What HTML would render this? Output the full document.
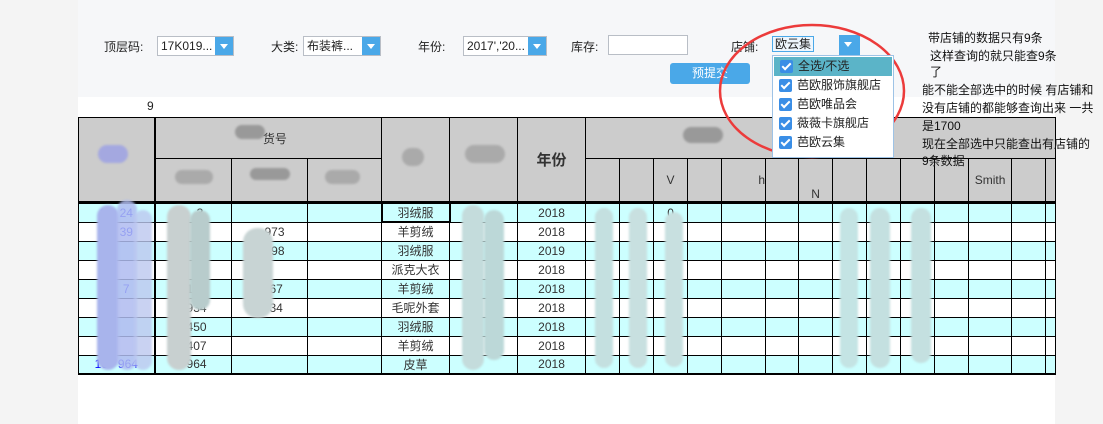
<!DOCTYPE html>
<html><head><meta charset="utf-8"><style>
*{margin:0;padding:0;box-sizing:border-box}
body{width:1103px;height:424px;background:#f4f4f4;font-family:"Liberation Sans","Noto Sans CJK SC",sans-serif;font-size:12px;color:#222;position:relative;overflow:hidden}
.main{position:absolute;left:78px;top:0;width:977px;height:424px;background:#fff}
.top{position:absolute;left:78px;top:0;width:977px;height:97px;background:#f6f7f9}
.a{position:absolute;white-space:nowrap}
.sel{position:absolute;height:20px;border:1px solid #b9bec6;background:#fff;font-size:12px;line-height:18px;padding-left:3px;overflow:hidden}
.sel i{position:absolute;right:0;top:0;width:18px;height:18px;background:#4aa8e8}
.sel i:after{content:"";position:absolute;left:5px;top:7px;border-left:4px solid transparent;border-right:4px solid transparent;border-top:5px solid #fff}
table{position:absolute;left:78px;top:117px;width:977px;border-collapse:collapse;table-layout:fixed}
td{border:1px solid #000;text-align:center;font-size:12px;height:19px;padding:0;overflow:hidden;white-space:nowrap;color:#333}
thead td{background:#ccc}
tr.c td{background:#ccffff}
a{color:#00f}
.bl{position:absolute;border-radius:14px;filter:blur(1px)}
.dd{position:absolute;left:772px;top:55px;width:122px;height:103px;background:#fff;border:1px solid #9ec3e6}
.it{height:19px;line-height:19px;padding-left:24px;position:relative;font-size:12px}
.it b{position:absolute;left:6px;top:3px;width:13px;height:13px;background:#3a8ee6;border-radius:2px}
.it b:after{content:"";position:absolute;left:4px;top:1px;width:3px;height:7px;border:solid #fff;border-width:0 2px 2px 0;transform:rotate(45deg)}
.note{position:absolute;font-size:12px;line-height:18px;color:#111;white-space:nowrap}
</style></head><body>
<div class="main"></div>
<div class="top"></div>
<div class="a" style="left:104px;top:38px">顶层码:</div>
<div class="sel" style="left:157px;top:36px;width:77px">17K019...<i></i></div>
<div class="a" style="left:271px;top:38px">大类:</div>
<div class="sel" style="left:303px;top:36px;width:78px">布装裤...<i></i></div>
<div class="a" style="left:418px;top:38px">年份:</div>
<div class="sel" style="left:463px;top:36px;width:84px">2017','20...<i></i></div>
<div class="a" style="left:571px;top:38px">库存:</div>
<div class="sel" style="left:608px;top:35px;width:80px"></div>
<div class="a" style="left:731px;top:38px">店铺:</div>
<div class="sel" style="left:770px;top:35px;width:90px;border:none;background:transparent"><span style="border:1px solid #4aa8e8;background:#eef6fd;padding:0 2px;margin-left:-1px">欧云集</span><i style="width:21px;height:20px;top:0"></i></div>
<div class="a" style="left:670px;top:63px;width:80px;height:21px;background:#4aa8e8;border-radius:3px;color:#fff;text-align:center;line-height:21px">预提交</div>
<div class="a" style="left:147px;top:99px">9</div>

<table>
<colgroup><col style="width:76px"><col style="width:77px"><col style="width:76px"><col style="width:74px"><col style="width:68px"><col style="width:68px"><col style="width:68px"><col style="width:34px"><col style="width:34px"><col style="width:34px"><col style="width:34px"><col style="width:44px"><col style="width:33px"><col style="width:34px"><col style="width:34px"><col style="width:34px"><col style="width:34px"><col style="width:34px"><col style="width:43px"><col style="width:34px"><col style="width:10px"></colgroup>
<thead>
<tr style="height:41px"><td rowspan="2" style="border-right:2px solid #000"></td><td colspan="3">&nbsp;&nbsp;&nbsp;&nbsp;货号</td><td rowspan="2"></td><td rowspan="2"></td><td rowspan="2" style="font-size:15px;font-weight:bold">年份</td><td colspan="14"></td></tr>
<tr style="height:44px;border-bottom:3px solid #000"><td></td><td></td><td></td><td></td><td></td><td>V</td><td></td><td style="text-align:right">h</td><td></td><td style="vertical-align:bottom">N</td><td></td><td></td><td></td><td></td><td>Smith</td><td></td><td></td></tr>
</thead>
<tbody>
<tr class="c"><td style="border-right:2px solid #000"><a>1&nbsp;&nbsp;&nbsp;&nbsp;24</a></td><td>&nbsp;&nbsp;&nbsp;&nbsp;3</td><td></td><td></td><td style="border:2px solid #000">羽绒服</td><td></td><td>2018</td><td></td><td></td><td>0</td><td></td><td></td><td></td><td></td><td></td><td></td><td></td><td></td><td></td><td></td><td></td></tr>
<tr><td style="border-right:2px solid #000"><a>1&nbsp;&nbsp;&nbsp;&nbsp;39</a></td><td>&nbsp;&nbsp;&nbsp;&nbsp;3</td><td>&nbsp;&nbsp;&nbsp;973</td><td></td><td>羊剪绒</td><td></td><td>2018</td><td></td><td></td><td></td><td></td><td></td><td></td><td></td><td></td><td></td><td></td><td></td><td></td><td></td><td></td></tr>
<tr class="c"><td style="border-right:2px solid #000"><a>1&nbsp;&nbsp;&nbsp;&nbsp;</a></td><td>&nbsp;&nbsp;&nbsp;98</td><td>&nbsp;&nbsp;&nbsp;298</td><td></td><td>羽绒服</td><td></td><td>2019</td><td></td><td></td><td></td><td></td><td></td><td></td><td></td><td></td><td></td><td></td><td></td><td></td><td></td><td></td></tr>
<tr><td style="border-right:2px solid #000"></td><td>&nbsp;&nbsp;&nbsp;78</td><td></td><td></td><td>派克大衣</td><td></td><td>2018</td><td></td><td></td><td></td><td></td><td></td><td></td><td></td><td></td><td></td><td></td><td></td><td></td><td></td><td></td></tr>
<tr class="c"><td style="border-right:2px solid #000"><a>1&nbsp;&nbsp;&nbsp;&nbsp;7</a></td><td>&nbsp;&nbsp;167</td><td>&nbsp;&nbsp;167</td><td></td><td>羊剪绒</td><td></td><td>2018</td><td></td><td></td><td></td><td></td><td></td><td></td><td></td><td></td><td></td><td></td><td></td><td></td><td></td><td></td></tr>
<tr><td style="border-right:2px solid #000"></td><td>&nbsp;&nbsp;934</td><td>&nbsp;&nbsp;934</td><td></td><td>毛呢外套</td><td></td><td>2018</td><td></td><td></td><td></td><td></td><td></td><td></td><td></td><td></td><td></td><td></td><td></td><td></td><td></td><td></td></tr>
<tr class="c"><td style="border-right:2px solid #000"></td><td>&nbsp;&nbsp;450</td><td></td><td></td><td>羽绒服</td><td></td><td>2018</td><td></td><td></td><td></td><td></td><td></td><td></td><td></td><td></td><td></td><td></td><td></td><td></td><td></td><td></td></tr>
<tr><td style="border-right:2px solid #000"></td><td>&nbsp;&nbsp;407</td><td></td><td></td><td>羊剪绒</td><td></td><td>2018</td><td></td><td></td><td></td><td></td><td></td><td></td><td></td><td></td><td></td><td></td><td></td><td></td><td></td><td></td></tr>
<tr class="c" style="border-bottom:2px solid #000"><td style="border-right:2px solid #000"><a>16&nbsp;&nbsp;&nbsp;964</a></td><td>&nbsp;&nbsp;964</td><td></td><td></td><td>皮草</td><td></td><td>2018</td><td></td><td></td><td></td><td></td><td></td><td></td><td></td><td></td><td></td><td></td><td></td><td></td><td></td><td></td></tr>
</tbody></table>

<div class="bl" style="left:97px;top:205px;width:22px;height:165px;background:#a8b4ec"></div>
<div class="bl" style="left:117px;top:200px;width:20px;height:170px;background:#b0bcf0;opacity:.85"></div>
<div class="bl" style="left:134px;top:210px;width:18px;height:160px;background:#bcc8f0;opacity:.8"></div>
<div class="bl" style="left:98px;top:145px;width:30px;height:18px;background:#a4a8e0"></div>
<div class="bl" style="left:167px;top:205px;width:24px;height:165px;background:#c8d0d0"></div>
<div class="bl" style="left:190px;top:210px;width:20px;height:100px;background:#b8cccc"></div>
<div class="bl" style="left:243px;top:228px;width:30px;height:90px;background:#c8d4d4"></div>
<div class="bl" style="left:462px;top:205px;width:22px;height:165px;background:#c4dcdc"></div>
<div class="bl" style="left:484px;top:210px;width:20px;height:150px;background:#bcd8d8"></div>
<div class="bl" style="left:595px;top:208px;width:18px;height:160px;background:#c4e0e0"></div>
<div class="bl" style="left:629px;top:208px;width:18px;height:160px;background:#c8e0e0"></div>
<div class="bl" style="left:665px;top:212px;width:18px;height:155px;background:#c8e0e0"></div>
<div class="bl" style="left:840px;top:208px;width:18px;height:160px;background:#c4e4e4"></div>
<div class="bl" style="left:870px;top:208px;width:20px;height:160px;background:#c4e0e0"></div>
<div class="bl" style="left:911px;top:208px;width:20px;height:155px;background:#c4e0e0"></div>
<div class="bl" style="left:235px;top:125px;width:30px;height:14px;background:#999"></div>
<div class="bl" style="left:175px;top:170px;width:38px;height:14px;background:#aaa"></div>
<div class="bl" style="left:250px;top:168px;width:40px;height:12px;background:#999"></div>
<div class="bl" style="left:325px;top:170px;width:35px;height:14px;background:#aaa"></div>
<div class="bl" style="left:402px;top:148px;width:22px;height:18px;background:#aaa"></div>
<div class="bl" style="left:465px;top:145px;width:40px;height:18px;background:#aaa"></div>
<div class="bl" style="left:683px;top:127px;width:40px;height:16px;background:#999"></div>

<svg class="a" style="left:0;top:0" width="1103" height="424"><ellipse cx="812" cy="91" rx="92" ry="66" fill="none" stroke="#ec3b3b" stroke-width="2.5"/></svg>

<div class="dd">
<div class="it" style="background:#5bb4c8;margin:1px 1px 0">
<b></b>全选/不选</div>
<div class="it"><b></b>芭欧服饰旗舰店</div>
<div class="it"><b></b>芭欧唯品会</div>
<div class="it"><b></b>薇薇卡旗舰店</div>
<div class="it"><b></b>芭欧云集</div>
</div>

<div class="note" style="left:928px;top:29px">带店铺的数据只有9条</div>
<div class="note" style="left:930px;top:47px">这样查询的就只能查9条</div>
<div class="note" style="left:930px;top:63px">了</div>
<div class="note" style="left:922px;top:81px">能不能全部选中的时候 有店铺和</div>
<div class="note" style="left:922px;top:99px">没有店铺的都能够查询出来 一共</div>
<div class="note" style="left:922px;top:117px">是1700</div>
<div class="note" style="left:922px;top:135px">现在全部选中只能查出有店铺的</div>
<div class="note" style="left:922px;top:152px">9条数据</div>
</body></html>
